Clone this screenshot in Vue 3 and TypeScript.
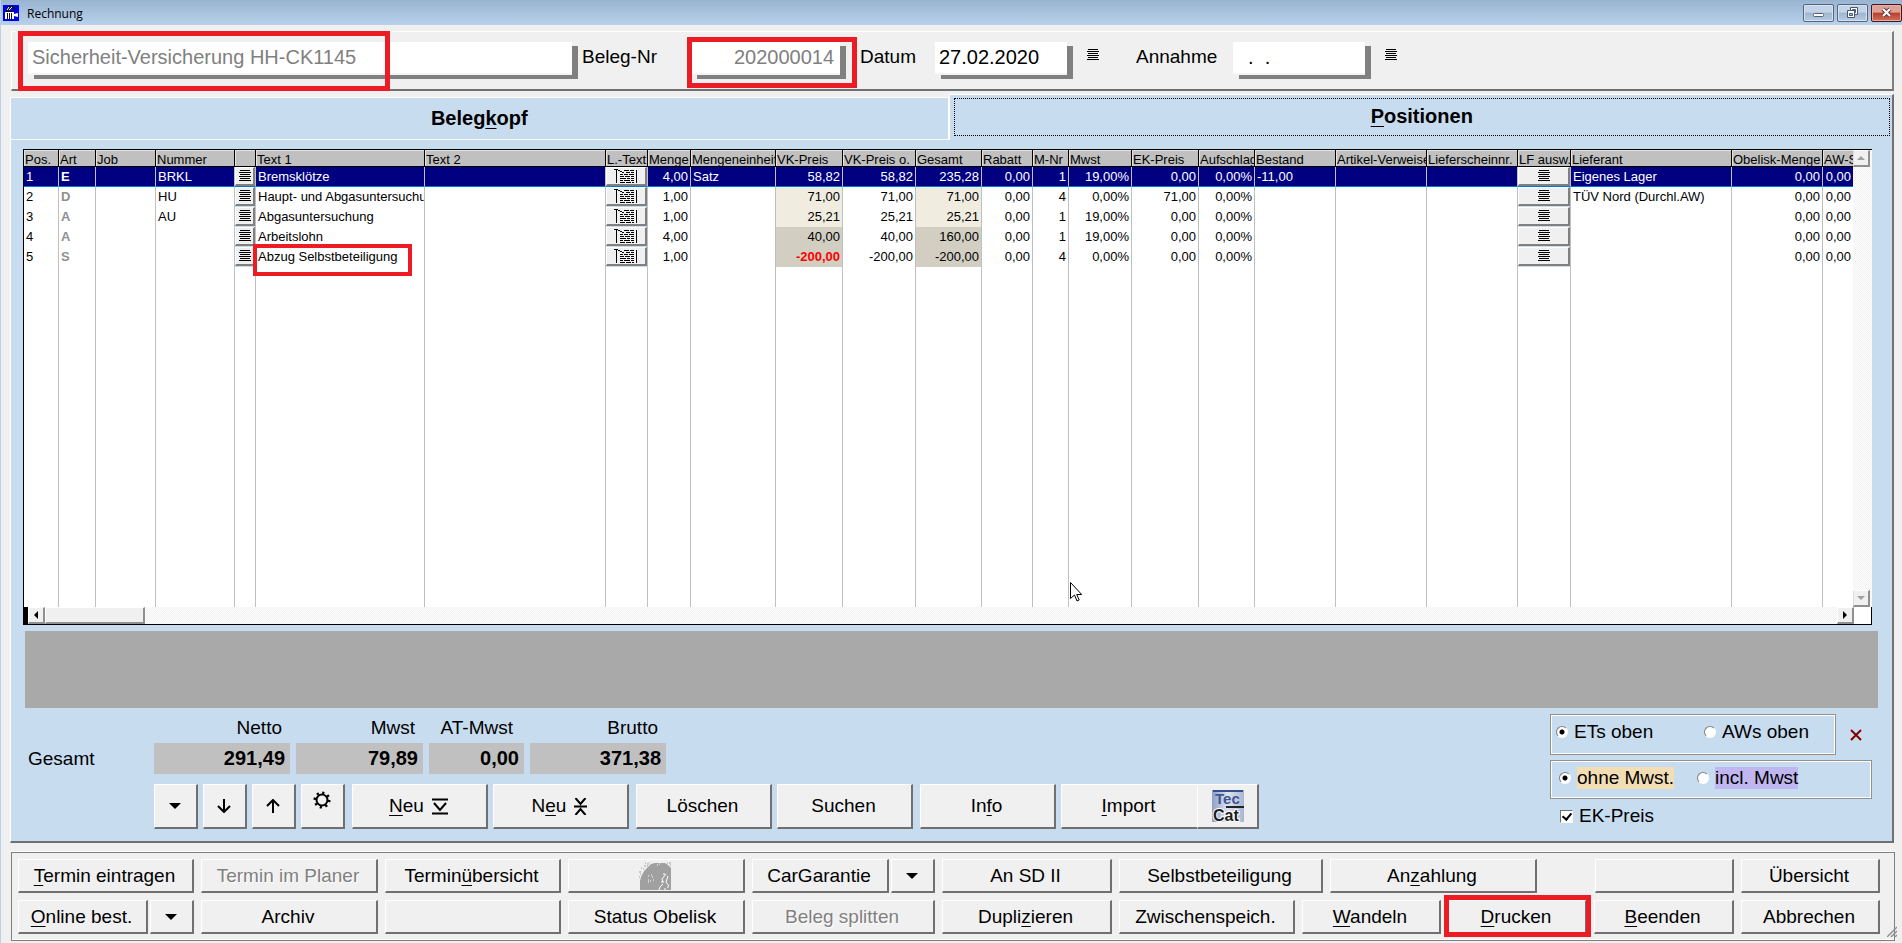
<script setup lang="ts">
import { ref } from 'vue'

interface Column { title: string; width: number; right?: boolean; button?: 'list' | 'text' }
interface Item { label: string; key?: number; width: number; disabled?: boolean; kind?: 'drop' | 'photo' | 'gap'; marked?: boolean }
type Slot = Item[]

const columns: Column[] = [
  { title: 'Pos.', width: 35 },
  { title: 'Art', width: 37 },
  { title: 'Job', width: 60 },
  { title: 'Nummer', width: 79 },
  { title: '', width: 21, button: 'list' },
  { title: 'Text 1', width: 169 },
  { title: 'Text 2', width: 181 },
  { title: 'L.-Text', width: 42, button: 'text' },
  { title: 'Menge', width: 43, right: true },
  { title: 'Mengeneinheit', width: 85 },
  { title: 'VK-Preis', width: 67, right: true },
  { title: 'VK-Preis o.', width: 73, right: true },
  { title: 'Gesamt', width: 66, right: true },
  { title: 'Rabatt', width: 51, right: true },
  { title: 'M-Nr', width: 36, right: true },
  { title: 'Mwst', width: 63, right: true },
  { title: 'EK-Preis', width: 67, right: true },
  { title: 'Aufschlag', width: 56, right: true },
  { title: 'Bestand', width: 81 },
  { title: 'Artikel-Verweise', width: 91 },
  { title: 'Lieferscheinnr.', width: 91 },
  { title: 'LF ausw.', width: 53, button: 'list' },
  { title: 'Lieferant', width: 161 },
  { title: 'Obelisk-Menge', width: 91, right: true },
  { title: 'AW-Satz', width: 30, right: true },
]

const rows: string[][] = [
  ['1', 'E', '', 'BRKL', '', 'Bremsklötze', '', '', '4,00', 'Satz', '58,82', '58,82', '235,28', '0,00', '1', '19,00%', '0,00', '0,00%', '-11,00', '', '', '', 'Eigenes Lager', '0,00', '0,00'],
  ['2', 'D', '', 'HU', '', 'Haupt- und Abgasuntersuchung', '', '', '1,00', '', '71,00', '71,00', '71,00', '0,00', '4', '0,00%', '71,00', '0,00%', '', '', '', '', 'TÜV Nord (Durchl.AW)', '0,00', '0,00'],
  ['3', 'A', '', 'AU', '', 'Abgasuntersuchung', '', '', '1,00', '', '25,21', '25,21', '25,21', '0,00', '1', '19,00%', '0,00', '0,00%', '', '', '', '', '', '0,00', '0,00'],
  ['4', 'A', '', '', '', 'Arbeitslohn', '', '', '4,00', '', '40,00', '40,00', '160,00', '0,00', '1', '19,00%', '0,00', '0,00%', '', '', '', '', '', '0,00', '0,00'],
  ['5', 'S', '', '', '', 'Abzug Selbstbeteiligung', '', '', '1,00', '', '-200,00', '-200,00', '-200,00', '0,00', '4', '0,00%', '0,00', '0,00%', '', '', '', '', '', '0,00', '0,00'],
]

const footer: Slot[][] = [
  [
    [{ label: 'Termin eintragen', key: 0, width: 176 }],
    [{ label: 'Termin im Planer', width: 177, disabled: true }],
    [{ label: 'Terminübersicht', key: 6, width: 176 }],
    [{ label: '', width: 177, kind: 'photo' }],
    [{ label: 'CarGarantie', width: 137 }, { label: '', width: 44, kind: 'drop' }],
    [{ label: 'An SD II', width: 170 }],
    [{ label: 'Selbstbeteiligung', width: 204 }],
    [{ label: 'Anzahlung', key: 2, width: 207 }],
    [{ label: '', width: 44, kind: 'gap' }],
    [{ label: '', width: 139 }],
    [{ label: 'Übersicht', width: 139 }],
  ],
  [
    [{ label: 'Online best.', key: 0, width: 130 }, { label: '', width: 44, kind: 'drop' }],
    [{ label: 'Archiv', width: 177 }],
    [{ label: '', width: 176 }],
    [{ label: 'Status Obelisk', width: 177 }],
    [{ label: 'Beleg splitten', width: 183, disabled: true }],
    [{ label: 'Duplizieren', key: 5, width: 170 }],
    [{ label: 'Zwischenspeich.', width: 176 }],
    [{ label: 'Wandeln', key: 0, width: 139 }],
    [{ label: 'Drucken', key: 0, width: 139, marked: true }],
    [{ label: 'Beenden', key: 0, width: 140 }],
    [{ label: 'Abbrechen', width: 139 }],
  ],
]

const slotWidth = (s: Slot) => s.reduce((sum, i) => sum + i.width, 0) + (s.length - 1) * 2
const grow = (w: number) => ({ flex: `${w} 1 ${w}px` })

function cellClass(r: number, c: number) {
  const col = columns[c]
  return {
    right: col.right,
    holds: !!col.button,
    art: c === 1,
    light: (c === 10 || c === 12) && (r === 1 || r === 2),
    dark: (c === 10 || c === 12) && r > 2,
    minus: c === 10 && r === 4,
    anchor: c === 5 && r === 4,
  }
}

const customer = ref('Sicherheit-Versicherung HH-CK1145')
const belegNr = ref('202000014')
const datum = ref('27.02.2020')
const annahme = ref('  .  .')
const order = ref('et')
const tax = ref('ohne')
const ekPreis = ref(true)
</script>

<template>
  <div class="window">
    <header class="titlebar">
      <svg class="appicon" width="16" height="16" viewBox="0 0 16 16" aria-hidden="true">
        <rect width="16" height="16" fill="#0000f0" />
        <path d="M3 6V4h1V2h2V1h4v1h2v3h-1V4h-1V3H7v1H6v2z" fill="#111" />
        <path d="M4 5l2-3M6 5l3-3" stroke="#fff" fill="none" />
        <path d="M2 7h9v7H2zM11 9l4-1v4l-4-1z" fill="#fff" />
        <path d="M4.500 8v6M6.500 8v6M8.500 8v6M3 6.500h8" stroke="#111" />
      </svg>
      <span class="caption">Rechnung</span>
      <div class="winbuttons">
        <button type="button" aria-label="Minimieren">
          <svg width="29" height="16" viewBox="0 0 29 16"><rect x="9.500" y="8.500" width="10" height="3" rx="1" fill="#fff" stroke="#50607a" /></svg>
        </button>
        <button type="button" aria-label="Wiederherstellen">
          <svg width="29" height="16" viewBox="0 0 29 16" fill="#fff" stroke="#46566e">
            <path d="M12.500 2.500h7v7h-7z" /><path d="M14.500 4.500h3v3h-3z" fill="#a9bdd5" />
            <path d="M9.500 5.500h7v7h-7z" /><path d="M11.500 8.500h3v2h-3z" fill="#a9bdd5" />
          </svg>
        </button>
        <button type="button" class="close" aria-label="Schließen">
          <svg width="29" height="16" viewBox="0 0 29 16"><path d="M11 4l7 7M18 4l-7 7" stroke="#5a3a3a" stroke-width="4" /><path d="M11 4l7 7M18 4l-7 7" stroke="#fff" stroke-width="2" /></svg>
        </button>
      </div>
    </header>

    <section class="head">
      <div class="field customer">
        <input v-model="customer" class="grey num" aria-label="Kunde" readonly />
        <i class="mark mark-customer"></i>
      </div>
      <label class="l-nr" for="nr">Beleg-Nr</label>
      <div class="field nr">
        <input id="nr" v-model="belegNr" class="grey right num" readonly />
        <i class="mark mark-nr"></i>
      </div>
      <label class="l-date" for="datum">Datum</label>
      <div class="field date"><input id="datum" v-model="datum" class="num" /></div>
      <button type="button" class="pick" aria-label="Datum wählen">
        <svg width="12" height="12" viewBox="0 0 12 12"><path d="M1 .5h10M0 2.500h12M1 4.500h10M0 6.500h12M1 8.500h10M0 10.500h12" stroke="#000" /></svg>
      </button>
      <label class="l-in" for="annahme">Annahme</label>
      <div class="field date"><input id="annahme" v-model="annahme" class="num" /></div>
      <button type="button" class="pick" aria-label="Annahme wählen">
        <svg width="12" height="12" viewBox="0 0 12 12"><path d="M1 .5h10M0 2.500h12M1 4.500h10M0 6.500h12M1 8.500h10M0 10.500h12" stroke="#000" /></svg>
      </button>
    </section>

    <nav class="tabs" role="tablist">
      <button type="button" role="tab" class="tab" aria-selected="false"><span>Beleg<u>k</u>opf</span></button>
      <button type="button" role="tab" class="tab active" aria-selected="true"><span><u>P</u>ositionen</span></button>
    </nav>

    <main class="page">
      <div class="grid">
        <div class="gridmain">
          <table>
            <colgroup><col v-for="(c, i) in columns" :key="i" :style="{ width: c.width + 'px' }" /></colgroup>
            <thead>
              <tr><th v-for="(c, i) in columns" :key="i" scope="col"><div>{{ c.title }}</div></th></tr>
            </thead>
            <tbody>
              <tr v-for="(row, r) in rows" :key="r" :class="{ selected: r === 0 }">
                <td v-for="(cell, c) in row" :key="c" :class="cellClass(r, c)">
                  <button v-if="columns[c].button" type="button" class="cellbtn" :aria-label="columns[c].title || 'Auswahl'">
                    <svg v-if="columns[c].button === 'list'" width="12" height="12" viewBox="0 0 12 12"><path d="M1 .5h10M0 2.500h12M1 4.500h10M0 6.500h12M1 8.500h10M0 10.500h12" stroke="#000" /></svg>
                    <svg v-else width="24" height="14" viewBox="0 0 24 14" fill="none" stroke="#000">
                      <path d="M0 .5h4M2.500 1v13M22.500 1v13M4 1.500h2M6 2.500h2M8 3.500h2M6 5.500h3M10 1.500h5M16 1.500h4M12 3.500h4M17 3.500h3M10 5.500h4M15 5.500h5" />
                      <path d="M6 7.500h4M11 7.500h5M17 7.500h3M6 9.500h6M13 9.500h3M17 9.500h3M6 11.500h3M10 11.500h6M17 11.500h3M6 13.500h5M12 13.500h5M18 13.500h2" />
                    </svg>
                  </button>
                  <div v-else class="txt">{{ cell }}</div>
                  <i v-if="r === 4 && c === 5" class="mark mark-row"></i>
                </td>
              </tr>
              <tr class="filler"><td v-for="(c, i) in columns" :key="i"></td></tr>
            </tbody>
          </table>
          <div class="vscroll">
            <button type="button" aria-label="Nach oben"><svg width="10" height="6" viewBox="0 0 10 6"><path d="M1 5L5 1l4 4z" fill="#a0a0a0" /></svg></button>
            <button type="button" aria-label="Nach unten"><svg width="10" height="6" viewBox="0 0 10 6"><path d="M1 1h8L5 5z" fill="#a0a0a0" /></svg></button>
          </div>
        </div>
        <div class="hscroll">
          <button type="button" aria-label="Nach links"><svg width="6" height="8" viewBox="0 0 6 8"><path d="M5 0v8L1 4z" /></svg></button>
          <span class="thumb"></span>
          <span class="track"></span>
          <button type="button" aria-label="Nach rechts"><svg width="6" height="8" viewBox="0 0 6 8"><path d="M1 0v8l4-4z" /></svg></button>
          <span class="corner"></span>
        </div>
        <svg class="cursor" width="12" height="20" viewBox="0 0 12 20" aria-hidden="true"><path d="M.5.5v16l4-3.500 2.500 6 2.200-1-2.500-5.500h5z" fill="#fff" stroke="#000" /></svg>
      </div>

      <div class="longtext"></div>

      <div class="lower">
        <div class="left">
          <div class="totals">
            <span class="sum">Gesamt</span>
            <div class="total w-a"><label for="t1">Netto</label><output id="t1">291,49</output></div>
            <div class="total w-b"><label for="t2">Mwst</label><output id="t2">79,89</output></div>
            <div class="total w-c"><label for="t3">AT-Mwst</label><output id="t3">0,00</output></div>
            <div class="total w-a"><label for="t4">Brutto</label><output id="t4">371,38</output></div>
          </div>
          <div class="tools">
            <div class="small">
              <button type="button" class="btn" aria-label="Menü"><svg width="12" height="8" viewBox="0 0 12 8"><path d="M0 1h12L6 7z" /></svg></button>
              <button type="button" class="btn" aria-label="Nach unten"><svg width="14" height="14" viewBox="0 0 14 14" fill="none" stroke="#000" stroke-width="2"><path d="M7 0v12M1 7l6 6 6-6" /></svg></button>
              <button type="button" class="btn" aria-label="Nach oben"><svg width="14" height="14" viewBox="0 0 14 14" fill="none" stroke="#000" stroke-width="2"><path d="M7 14V2M1 7l6-6 6 6" /></svg></button>
              <button type="button" class="btn gear" aria-label="Einstellungen">
                <svg width="18" height="18" viewBox="0 0 18 18"><circle cx="9" cy="9" r="5.500" fill="none" stroke="#000" stroke-width="2" /><circle cx="9" cy="9" r="7.300" fill="none" stroke="#000" stroke-width="2.500" stroke-dasharray="2.200 3.530" /></svg>
              </button>
            </div>
            <div class="pair">
              <button type="button" class="btn"><span><u>N</u>eu</span><svg width="16" height="17" viewBox="0 0 16 17" fill="none" stroke="#000" stroke-width="2"><path d="M0 1.500h16M0 15.500h16M2 5l6 7 6-7" /></svg></button>
              <button type="button" class="btn"><span>N<u>e</u>u</span><svg width="13" height="17" viewBox="0 0 13 17" fill="none" stroke="#000" stroke-width="2"><path d="M0 8.500h13M1.500 0l5 6 5-6M1.500 17l5-6 5 6" /></svg></button>
            </div>
            <div class="pair">
              <button type="button" class="btn">Löschen</button>
              <button type="button" class="btn">Suchen</button>
            </div>
            <div class="pair">
              <button type="button" class="btn"><span>In<u>f</u>o</span></button>
              <div class="joined">
                <button type="button" class="btn"><span><u>I</u>mport</span></button>
                <button type="button" class="btn tec" aria-label="TecCat">
                  <svg width="32" height="32" viewBox="0 0 32 32">
                    <defs><linearGradient id="tc" x1="0" x2="1"><stop offset="0" stop-color="#8f9fc4" /><stop offset=".5" stop-color="#dfe4ee" /><stop offset="1" stop-color="#a9b5cf" /></linearGradient></defs>
                    <rect width="32" height="32" fill="url(#tc)" />
                    <path d="M1 1h30" stroke="#33508f" stroke-width="2" /><path d="M14 17h18" stroke="#222" stroke-width="2" />
                    <text x="3" y="14" font-size="15" font-weight="700" fill="#3a5796" font-family="Liberation Sans">Tec</text>
                    <text x="1" y="31" font-size="16" font-weight="700" fill="#1c1c1c" stroke="#fff" stroke-width="2" paint-order="stroke" font-family="Liberation Sans">Cat</text>
                  </svg>
                </button>
              </div>
            </div>
          </div>
        </div>

        <div class="options">
          <div class="first">
            <div class="box box1">
              <label><input v-model="order" type="radio" name="order" value="et" /><span>ETs oben</span></label>
              <label><input v-model="order" type="radio" name="order" value="aw" /><span>AWs oben</span></label>
            </div>
            <button type="button" class="del" aria-label="Entfernen"><svg width="12" height="12" viewBox="0 0 12 12"><path d="M1 1l10 10M11 1L1 11" stroke="#800000" stroke-width="2" /></svg></button>
          </div>
          <div class="box box2">
            <label><input v-model="tax" type="radio" name="tax" value="ohne" /><span class="sand">ohne Mwst.</span></label>
            <label><input v-model="tax" type="radio" name="tax" value="incl" /><span class="lilac">incl. Mwst</span></label>
          </div>
          <label class="check"><input v-model="ekPreis" type="checkbox" /><span>EK-Preis</span></label>
        </div>
      </div>
    </main>

    <footer class="foot">
      <div v-for="(line, l) in footer" :key="l" class="line">
        <div v-for="(slot, s) in line" :key="s" class="slot" :style="grow(slotWidth(slot))">
          <template v-for="(b, i) in slot" :key="i">
            <span v-if="b.kind === 'gap'"></span>
            <button v-else type="button" class="btn" :disabled="b.disabled" :aria-label="b.label || 'Funktion'" :style="grow(b.width)">
              <svg v-if="b.kind === 'drop'" width="12" height="8" viewBox="0 0 12 8"><path d="M0 1h12L6 7z" /></svg>
              <svg v-else-if="b.kind === 'photo'" width="32" height="28" viewBox="0 0 32 28">
                <path d="M1 28V19l1-4 2-4 2-3 3-3 3-3 4-1h10l3 2 3 3v22z" fill="#a0a0a0" />
                <path d="M6 1h1M8 2h2M10 0h1M5 4h2M2 6h1M4 7h1M0 10h2M1 12h1M0 15h1M8 4h1M28 1h1M30 1h2M31 3h1" stroke="#a0a0a0" />
                <path d="M9 14h1M12 13h1M13 15h1M9 18h1M11 19h1M14 18h1M9 20h1M18 3h1M20 2h1M24 12h2M27 12l-4 5 1 3M29 14l-2 6 3 4M24 22l-3 3-1 3M22 20h3M28 25h2M25 27h2" stroke="#fff" fill="none" />
              </svg>
              <span v-else-if="b.key !== undefined">{{ b.label.slice(0, b.key) }}<u>{{ b.label[b.key] }}</u>{{ b.label.slice(b.key + 1) }}</span>
              <span v-else>{{ b.label }}</span>
            </button>
            <i v-if="b.marked" class="mark mark-print"></i>
          </template>
        </div>
      </div>
      <svg class="grip" width="10" height="11" viewBox="0 0 10 11" aria-hidden="true"><path d="M0 11L10 1M4 11l6-6M8 11l2-2" stroke="#909090" stroke-width="1.500" /></svg>
    </footer>
  </div>
</template>

<style>
html, body { margin: 0; background: #f0f0f0; }
</style>

<style scoped>
* { box-sizing: border-box; }
.window {
  min-height: 100vh; display: flex; flex-direction: column; padding-bottom: 2px;
  background: #f0f0f0; border-left: 1px solid #b9d1ea; color: #000;
  font: 19px/22px "Liberation Sans", Arial, sans-serif;
}
button, input { font: inherit; color: inherit; margin: 0; padding: 0; border-radius: 0; }
button { display: flex; align-items: center; justify-content: center; white-space: nowrap; }
u { text-decoration-thickness: 1px; text-underline-offset: 3px; }

.titlebar { height: 25px; display: flex; align-items: center; background: linear-gradient(#99b4d1, #b9d1ea); padding-left: 2px; }
.caption { margin-left: 8px; padding-top: 2px; font: 12px/16px "Open Sans", "Noto Sans", sans-serif; flex: 1; }
.winbuttons { display: flex; gap: 3px; }
.winbuttons button { width: 31px; height: 18px; border: 1px solid #54677f; border-radius: 2px; background: linear-gradient(#c3d4e8 45%, #9fb6d0 50%, #b6cce4); box-shadow: inset 0 0 0 1px #d5e2f0; }
.winbuttons .close { border-color: #431422; background: linear-gradient(#dfa195 45%, #b9402c 50%, #d0705a); box-shadow: inset 0 0 0 1px #e3aea4; }

.head { display: flex; align-items: flex-start; margin: 6px 8px 0 10px; padding: 10px 0 10px 16px; border: 1px solid #fff; border-right: 2px solid #808080; border-bottom: 2px solid #707070; height: 60px; }
.head label { line-height: 30px; }
.field { position: relative; }
.field input { display: block; width: 100%; height: 33px; padding: 0 4px; border: 0; border-bottom: 2px solid #f4f4f4; background: #fff; box-shadow: 6px 4px 0 #808080; outline: 0; }
.field .num { font-size: 20px; white-space: pre; }
.field .grey { color: #808080; }
.field .right { text-align: right; padding-right: 6px; }
.customer { width: 544px; }
.l-nr { margin-left: 10px; width: 109px; }
.nr { width: 149px; }
.l-date { margin-left: 20px; width: 75px; }
.date { width: 132px; }
.l-in { margin-left: 37px; width: 97px; }
.pick { border: 0; background: none; margin: 7px 0 0 20px; }
.mark { position: absolute; border: 5px solid #ed1c24; pointer-events: none; }
.mark-customer { left: -10px; top: -11px; width: 372px; height: 60px; }
.mark-nr { left: -4px; right: -17px; top: -5px; height: 51px; }
.mark-row { left: -3px; top: -3px; width: 159px; height: 32px; border-width: 4px; z-index: 2; }
.mark-print { inset: -5px -4px -3px -4px; }

.tabs { display: flex; margin: 3px 8px 0 9px; height: 46px; }
.tab { flex: 1 1 0; border: 1px solid #fff; background: #c8dcf0; font-weight: 700; font-size: 20px; margin-top: 3px; padding-bottom: 2px; }
.tab.active { margin-top: 0; padding: 3px 2px 4px 4px; border-right: 2px solid #707070; border-bottom: 0; }
.tab.active span { flex: 1; align-self: stretch; border: 1px dotted #000; line-height: 35px; }

.page { flex: 1; display: flex; flex-direction: column; margin: 0 8px 0 9px; padding: 9px 14px 0 12px; background: #c8dcf0; border-left: 1px solid #fff; border-right: 2px solid #707070; border-bottom: 2px solid #707070; }
.grid { position: relative; flex: 1; display: flex; flex-direction: column; margin-right: 6px; border: 1px solid #000; background: #fff; }
.gridmain { flex: 1; display: flex; }
table { flex: 1; width: 100%; min-width: 0; table-layout: fixed; border-collapse: separate; border-spacing: 0; font-size: 13px; line-height: 16px; }
th { height: 17px; padding: 0; background: #c0c0c0; border-right: 1px solid #000; border-bottom: 1px solid #000; box-shadow: inset 1px 1px 0 #e4e4e4; font-weight: 400; text-align: left; }
th div { height: 16px; line-height: 19px; padding-left: 1px; overflow: hidden; white-space: nowrap; }
td { height: 20px; padding: 0; border-right: 1px solid #c0c0c0; vertical-align: top; }
th:last-child, td:last-child { border-right: 0; }
.txt { height: 19px; line-height: 19px; padding: 0 0 0 2px; overflow: hidden; white-space: nowrap; }
.right .txt { text-align: right; padding: 0 2px 0 0; }
.selected td { background: #000080; color: #fff; border-bottom: 1px solid #0078d7; }
.art .txt { color: #909090; font-weight: 700; }
.selected .art .txt { color: #fff; }
td.light { background: #f0ede0; }
td.dark { background: #d2cec2; }
td.minus { color: #f00; font-weight: 700; }
td.anchor { position: relative; }
td.holds { background: #c8dcf0; }
.filler td { height: auto; background: #fff; }
.cellbtn { width: 100%; height: 19px; border: 1px solid #fff; border-right: 2px solid #808080; border-bottom: 2px solid #808080; background: #f0f0f0; }
.vscroll { flex: none; width: 19px; display: flex; flex-direction: column; justify-content: space-between; }
.vscroll, .track { background: repeating-conic-gradient(#f0f0f0 0 25%, #fff 0 50%) 0 0 / 2px 2px; }
.vscroll button, .hscroll button, .thumb { flex: none; width: 17px; height: 17px; background: #f0f0f0; border: 1px solid #fff; border-right: 2px solid #909090; border-bottom: 2px solid #909090; }
.vscroll button { border-left-color: #ddd; }
.hscroll { display: flex; height: 17px; border-left: 4px solid #000; }
.hscroll .thumb { width: 100px; }
.track { flex: 1; }
.corner { width: 17px; background: #fff; }
.cursor { position: absolute; left: 1046px; bottom: 22px; }

.longtext { height: 77px; margin: 6px 0 0 2px; background: #a9a9a9; }
.lower { display: flex; justify-content: space-between; padding-bottom: 12px; }
.left { padding: 9px 0 0 5px; }
.totals { display: flex; align-items: flex-end; }
.sum { width: 126px; margin-bottom: 4px; }
.total { display: flex; flex-direction: column; text-align: right; margin-right: 6px; }
.total label { padding-right: 8px; line-height: 22px; margin-bottom: 4px; }
.total.w-c label { padding-right: 11px; }
.total output { height: 31px; line-height: 31px; padding-right: 5px; background: #c0c0c0; font-weight: 700; font-size: 20px; }
.w-a { width: 136px; }
.w-b { width: 127px; }
.w-c { width: 95px; }
.tools { display: flex; gap: 7px; margin: 10px 0 0 126px; }
.small, .pair { display: flex; gap: 5px; }
.btn { border: 1px solid #fff; border-right: 2px solid #707070; border-bottom: 2px solid #707070; background: #f0f0f0; gap: 8px; padding-right: 2px; }
.tools .btn { width: 136px; height: 45px; }
.tools .small .btn { width: 44px; }
.tools .gear { padding-bottom: 12px; }
.joined { display: flex; }
.tools .joined .btn:first-child { border-right: 0; }
.tools .joined .tec { width: 62px; padding: 0; }

.options { width: 323px; margin-right: 5px; padding-top: 6px; }
.first { display: flex; align-items: center; }
.box { display: flex; border: 1px solid #909090; outline: 1px solid #fff; outline-offset: -2px; }
.box1 { width: 286px; height: 41px; padding: 6px 0 0 5px; }
.box2 { width: 322px; height: 39px; margin-top: 5px; padding: 6px 0 0 8px; }
.box label, .check { display: flex; flex: none; align-items: flex-start; white-space: nowrap; }
.box1 label:first-child { width: 148px; }
.box2 label:first-child { width: 138px; }
.box input { appearance: none; width: 12px; height: 12px; margin: 5px 6px 0 0; border: 1px solid #808080; border-right-color: #fff; border-bottom-color: #fff; border-radius: 50%; background: #fff; }
.box input:checked { background: radial-gradient(circle, #000 0 2px, #fff 3px); }
.sand { background: #f3deb4; }
.lilac { background: #c0b6f0; }
.del { border: 0; background: none; margin-left: 14px; }
.check { margin: 6px 0 0 10px; }
.check input { appearance: none; width: 13px; height: 13px; margin: 5px 6px 0 0; border: 1px solid #707070; border-right-color: #fff; border-bottom-color: #fff; background: #fff; display: grid; place-items: center; }
.check input:checked::after { content: ""; width: 4px; height: 7px; margin-bottom: 2px; border: solid #000; border-width: 0 2px 2px 0; transform: rotate(40deg); }

.foot { position: relative; margin: 9px 7px 0 10px; padding: 6px 14px 6px 6px; border: 1px solid #808080; box-shadow: 0 -1px 0 #fff, inset 0 -1px 0 #fff; display: flex; flex-direction: column; gap: 7px; }
.line { display: flex; gap: 7px; }
.slot { position: relative; display: flex; gap: 2px; min-width: 0; }
.slot .btn { height: 34px; min-width: 0; }
.btn:disabled { color: #808080; text-shadow: 1px 1px 0 #fff; }
.grip { position: absolute; right: -3px; bottom: 3px; }
</style>
